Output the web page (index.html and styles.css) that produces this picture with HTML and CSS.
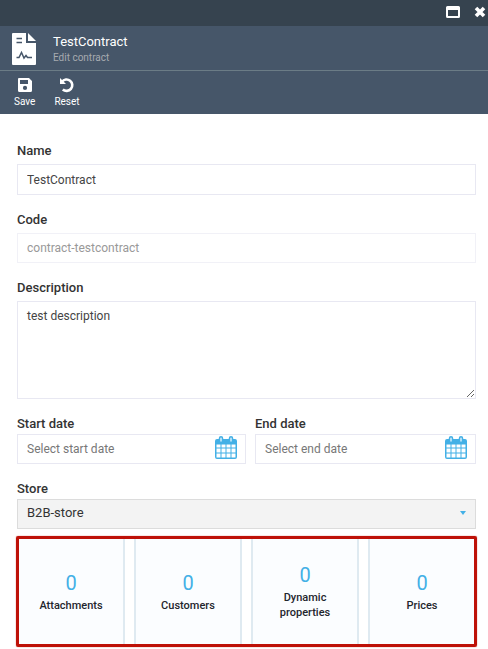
FILE: index.html
```html
<!DOCTYPE html>
<html lang="en">
<head>
<meta charset="utf-8">
<meta name="viewport" content="width=device-width, initial-scale=1">
<title>TestContract</title>
<link rel="stylesheet" href="styles.css">
</head>
<body>
<svg class="sprite" aria-hidden="true">
  <symbol id="calendar" viewBox="0 0 22 24">
    <path fill="#43b0e6" fill-rule="evenodd" d="M2 3H20Q22 3 22 5V21Q22 23 20 23H2Q0 23 0 21V5Q0 3 2 3ZM1.500 8.500V11.500H5.500V8.500ZM6.500 8.500V11.500H10.500V8.500ZM11.500 8.500V11.500H15.500V8.500ZM16.500 8.500V11.500H20.500V8.500ZM1.500 12.500V16.500H5.500V12.500ZM6.500 12.500V16.500H10.500V12.500ZM11.500 12.500V16.500H15.500V12.500ZM16.500 12.500V16.500H20.500V12.500ZM1.500 17.500V21.500H5.500V17.500ZM6.500 17.500V21.500H10.500V17.500ZM11.500 17.500V21.500H15.500V17.500ZM16.500 17.500V21.500H20.500V17.500Z"/>
    <g fill="#d5eefa" stroke="#43b0e6" stroke-width="1.500"><rect x="4.500" y="0.800" width="3" height="5.700" rx="1.500"/><rect x="14.500" y="0.800" width="3" height="5.700" rx="1.500"/></g>
  </symbol>
</svg>
<header class="blade-head">
  <div class="window-bar">
    <button class="window-button" type="button" aria-label="Maximize">
      <svg width="14" height="12" viewBox="0 0 14 12"><path fill="#fff" fill-rule="evenodd" d="M1.500 0H12.500Q14 0 14 1.500V10.500Q14 12 12.500 12H1.500Q0 12 0 10.500V1.500Q0 0 1.500 0ZM2 4V10H12V4Z"/></svg>
    </button>
    <button class="window-button" type="button" aria-label="Close">
      <svg width="12" height="12" viewBox="0 0 12 12"><path fill="none" stroke="#fff" stroke-width="3.600" d="M2 2L10 10M10 2L2 10"/></svg>
    </button>
  </div>
  <div class="title-row">
    <svg width="24" height="32" viewBox="0 0 24 32" aria-hidden="true">
      <path fill="#fff" d="M1 0H14V10H24V31Q24 32 23 32H1Q0 32 0 31V1Q0 0 1 0ZM16 0L24 8H16Z"/>
      <path fill="none" stroke="#465669" stroke-width="1.500" d="M4.500 5.500H10M4.500 9.500H10M4.500 24.500H7L9.500 19.500L12 25L14 22.500L15.500 24.500H20"/>
    </svg>
    <div>
      <h1 class="title">TestContract</h1>
      <p class="subtitle">Edit contract</p>
    </div>
  </div>
  <div class="toolbar">
    <button class="tool" type="button">
      <svg width="16" height="16" viewBox="0 0 16 16"><path fill="#fff" fill-rule="evenodd" d="M2 1H12L15 4V13.500Q15 15 13.500 15H2.500Q1 15 1 13.500V2Q1 1 2 1ZM3 3V7H11V3ZM8 8.800A2.100 2.100 0 1 0 8 13A2.100 2.100 0 1 0 8 8.800Z"/></svg>
      Save
    </button>
    <button class="tool" type="button">
      <svg width="16" height="16" viewBox="0 0 16 16"><path fill="none" stroke="#fff" stroke-width="2.600" d="M3 4.800A5.700 5.700 0 1 1 3.800 12.500"/><path fill="#fff" d="M1 1V7H7Z"/></svg>
      Reset
    </button>
  </div>
</header>
<main class="content">
  <form class="form">
    <div class="field">
      <label class="label" for="name">Name</label>
      <input class="control" id="name" type="text" value="TestContract">
    </div>
    <div class="field">
      <label class="label" for="code">Code</label>
      <input class="control" id="code" type="text" value="contract-testcontract" disabled>
    </div>
    <div class="field">
      <label class="label" for="description">Description</label>
      <textarea class="control area" id="description">test description</textarea>
    </div>
    <div class="dates">
      <div class="field compact">
        <label class="label" for="start">Start date</label>
        <div class="date-box">
          <input class="date-input" id="start" type="text" placeholder="Select start date">
          <button class="date-button" type="button" aria-label="Pick start date"><svg width="22" height="24"><use href="#calendar"/></svg></button>
        </div>
      </div>
      <div class="field compact">
        <label class="label" for="end">End date</label>
        <div class="date-box">
          <input class="date-input" id="end" type="text" placeholder="Select end date">
          <button class="date-button" type="button" aria-label="Pick end date"><svg width="22" height="24"><use href="#calendar"/></svg></button>
        </div>
      </div>
    </div>
    <div class="field compact">
      <label class="label" for="store">Store</label>
      <div class="select-box">
        <select class="control select" id="store"><option>B2B-store</option></select>
        <svg class="caret" width="6" height="4" viewBox="0 0 6 4" aria-hidden="true"><path fill="#43b0e6" d="M0 0H6L3 4Z"/></svg>
      </div>
    </div>
  </form>
  <section class="widgets" aria-label="Widgets">
    <button class="widget" type="button"><span class="count">0</span><span class="caption">Attachments</span></button>
    <button class="widget" type="button"><span class="count">0</span><span class="caption">Customers</span></button>
    <button class="widget" type="button"><span class="count">0</span><span class="caption">Dynamic properties</span></button>
    <button class="widget" type="button"><span class="count">0</span><span class="caption">Prices</span></button>
  </section>
</main>
</body>
</html>
```
FILE: styles.css
```css
* { box-sizing: border-box; }
body {
  margin: 0;
  background: #fff;
  color: #333;
  font: 12px/16px Roboto, sans-serif;
}
button, input, textarea, select { font: inherit; color: inherit; margin: 0; }
button { padding: 0; border: 0; background: none; cursor: pointer; }
svg { display: block; flex: none; }
.sprite { position: absolute; width: 0; height: 0; }

.blade-head { background: #465669; color: #fff; }
.window-bar {
  display: flex;
  justify-content: flex-end;
  align-items: center;
  gap: 14px;
  height: 26px;
  padding: 0 2px 3px 0;
  background: #36434f;
}
.title-row {
  display: flex;
  align-items: center;
  gap: 17px;
  height: 45px;
  padding: 1px 12px 0;
  border-bottom: 1px solid #6b7c86;
}
.title { margin: 0; font-size: 13px; line-height: 18px; font-weight: 400; }
.subtitle { margin: 0; color: #a7abb0; font-size: 10px; line-height: 14px; }
.toolbar { display: flex; gap: 19px; height: 43px; padding: 6px 14px 0; }
.tool {
  display: flex;
  flex-direction: column;
  align-items: center;
  gap: 2px;
  font-size: 10px;
  line-height: 14px;
}

.content { padding: 29px 12px 4px 17px; }
.form { display: grid; gap: 17px; }
.field { display: grid; gap: 5px; min-width: 0; }
.compact { gap: 2px; }
.label { color: #333; font-size: 13px; font-weight: 500; }
.control {
  display: block;
  width: 100%;
  height: 31px;
  padding: 0 9px;
  border: 1px solid #e8e8f2;
  border-radius: 0;
  background: #fff;
  color: #444;
}
.control:disabled { height: 30px; border-color: #f1f1f7; color: #999; }
.area { height: 98px; padding: 6px 9px; resize: vertical; }
.dates { display: grid; grid-template-columns: 229fr 221fr; gap: 9px; }
.date-box {
  display: flex;
  align-items: center;
  height: 30px;
  padding: 0 8px 0 9px;
  border: 1px solid #e8e8f2;
}
.date-input { flex: 1; min-width: 0; padding: 0; border: 0; background: none; outline: 0; }
.date-input::placeholder { color: #777; opacity: 1; }
.date-button { padding-bottom: 2px; }
.select-box { display: grid; align-items: center; }
.select-box > * { grid-area: 1 / 1; }
.select { height: 30px; appearance: none; border-color: #dcdcdc; background: #f3f3f3; color: #333; font-size: 13px; padding-bottom: 2px; }
.caret { justify-self: end; margin: 0 10px 3px 0; pointer-events: none; }

.widgets {
  position: relative;
  display: grid;
  grid-template-columns: repeat(4, 1fr);
  gap: 9px;
  margin-top: 8px;
}
.widgets::after {
  content: "";
  position: absolute;
  inset: -1px;
  border: 3px solid #be1108;
  border-radius: 2px;
  box-shadow: 0 0 1px #be1108;
  pointer-events: none;
}
.widget {
  display: flex;
  flex-direction: column;
  align-items: center;
  justify-content: center;
  gap: 3px;
  min-height: 109px;
  padding: 0 20px;
  border: 2px solid #dfeaf1;
  background: #fbfdff;
}
.count { color: #43b0e6; font-size: 20px; line-height: 24px; }
.caption { color: #1f262d; font-size: 11px; line-height: 15px; font-weight: 500; }
```
